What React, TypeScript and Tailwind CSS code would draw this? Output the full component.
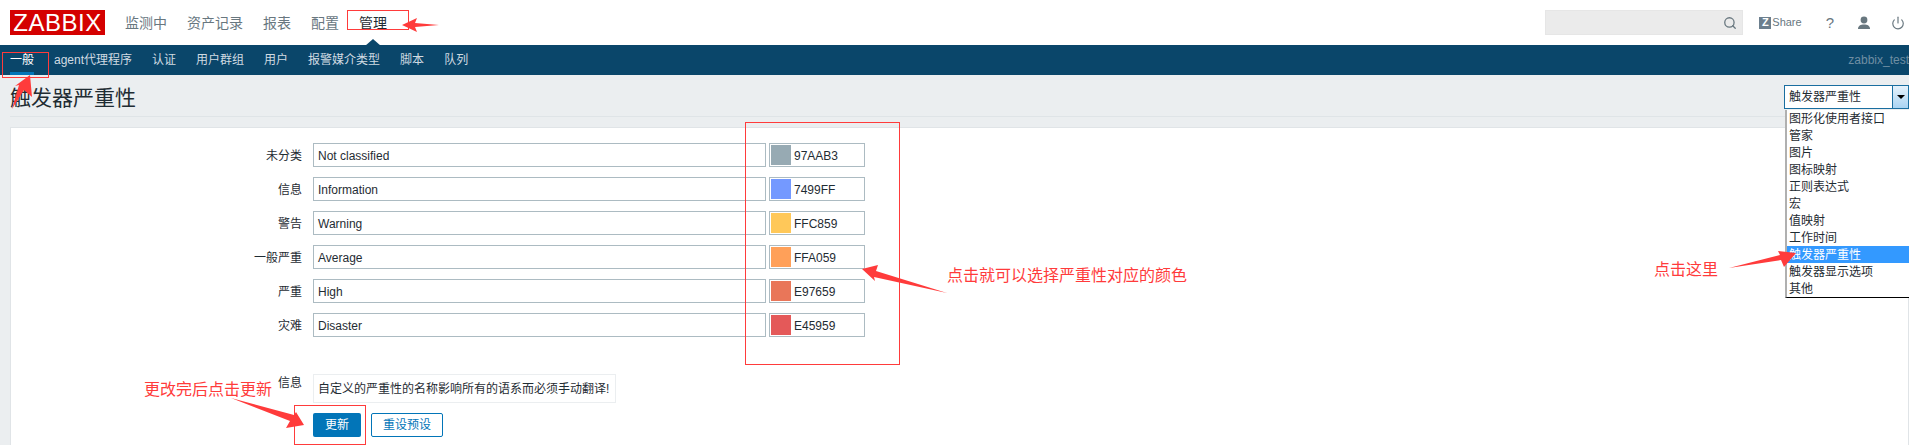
import { Search, Power } from "lucide-react";

const FONT = "[font-family:'Liberation_Sans','Noto_Sans_CJK_SC',sans-serif]";

const mainNav = ["监测中", "资产记录", "报表", "配置", "管理"];
const subNav = ["一般", "agent代理程序", "认证", "用户群组", "用户", "报警媒介类型", "脚本", "队列"];
const severities = [
  { label: "未分类", name: "Not classified", hex: "97AAB3", swatch: "bg-[#97AAB3]" },
  { label: "信息", name: "Information", hex: "7499FF", swatch: "bg-[#7499FF]" },
  { label: "警告", name: "Warning", hex: "FFC859", swatch: "bg-[#FFC859]" },
  { label: "一般严重", name: "Average", hex: "FFA059", swatch: "bg-[#FFA059]" },
  { label: "严重", name: "High", hex: "E97659", swatch: "bg-[#E97659]" },
  { label: "灾难", name: "Disaster", hex: "E45959", swatch: "bg-[#E45959]" },
];
const options = ["图形化使用者接口", "管家", "图片", "图标映射", "正则表达式", "宏", "值映射", "工作时间", "触发器严重性", "触发器显示选项", "其他"];

function Header() {
  return (
    <header className="flex h-[45px] items-center bg-white pl-[10px]">
      <div className="flex h-[25px] w-[95px] items-center justify-center bg-[#d40000] text-[24px] leading-none tracking-[0.5px] text-white">
        ZABBIX
      </div>
      <nav className="ml-[20px] flex gap-[20px] text-sm text-[#68777f]">
        {mainNav.map((item) => (
          <span key={item} className={item === "管理" ? "relative text-[#1f2c33]" : ""}>
            {item}
            {item === "管理" && (
              <span className="absolute left-[6px] top-[26px] h-0 w-0 border-x-[8px] border-b-[7px] border-x-transparent border-b-[#0a466a]" />
            )}
          </span>
        ))}
      </nav>
      <div className="ml-auto flex items-center">
        <div className="flex h-[25px] w-[198px] items-center justify-end border border-[#e6e6e6] bg-[#ebebeb] pr-[5px]">
          <Search size={14} strokeWidth={2.2} className="text-[#68777f]" />
        </div>
        <div className="ml-[16px] flex h-[12px] w-[12px] items-center justify-center bg-[#6c7f8e] text-[11px] font-bold leading-none text-white">
          Z
        </div>
        <span className="ml-[1px] text-[11px] text-[#68777f]">Share</span>
        <span className="ml-[24px] text-[15px] leading-none text-[#68777f]">?</span>
        <svg viewBox="0 0 14 14" className="ml-[23px] h-[14px] w-[14px] fill-[#68777f]">
          <circle cx="7" cy="4" r="3.4" />
          <path d="M1 13c0-3 2.500-4.400 6-4.400s6 1.400 6 4.400z" />
        </svg>
        <Power size={14} strokeWidth={2} className="ml-[20px] mr-[4px] text-[#68777f]" />
      </div>
    </header>
  );
}

function SubNav() {
  return (
    <div className="flex h-[30px] items-center justify-between bg-[#0a466a] pl-[10px] text-xs">
      <div className="flex h-full gap-[20px] text-[#d0dbe2]">
        {subNav.map((item) => (
          <span
            key={item}
            className={
              item === "一般"
                ? "flex items-center border-b-[3px] border-[#0275b8] pt-[3px] text-white"
                : "flex items-center"
            }
          >
            {item}
          </span>
        ))}
      </div>
      <span className="text-[#6f8ea3]">zabbix_test</span>
    </div>
  );
}

function SeverityRow({ label, name, hex, swatch }: (typeof severities)[number]) {
  return (
    <div className="flex h-[24px] items-center text-xs text-[#1f2c33]">
      <span className="w-[291px] pt-[1px] text-right">{label}</span>
      <div className="ml-[11px] flex h-full w-[453px] items-center border border-[#acbbc2] bg-white pl-[4px] pt-[1px]">
        {name}
      </div>
      <div className="ml-[3px] flex h-full w-[96px] items-center border border-[#acbbc2] bg-white pl-[1px]">
        <span className={`h-[20px] w-[20px] ${swatch}`} />
        <span className="ml-[3px] pt-[1px]">{hex}</span>
      </div>
    </div>
  );
}

function Form() {
  return (
    <section className="ml-[10px] mt-[10px] h-[330px] border border-[#e0e4e7] bg-white pt-[15px]">
      <div className="flex flex-col gap-[10px]">
        {severities.map((s) => (
          <SeverityRow key={s.label} {...s} />
        ))}
      </div>
      <div className="mt-[37px] flex text-xs text-[#1f2c33]">
        <span className="w-[291px] pt-[1px] text-right">信息</span>
        <div className="ml-[11px] flex h-[29px] w-[303px] items-center border border-[#ebeef0] pl-[4px]">
          自定义的严重性的名称影响所有的语系而必须手动翻译!
        </div>
      </div>
      <div className="ml-[302px] mt-[10px] flex gap-[10px] text-xs">
        <button className="h-[24px] w-[48px] rounded-[2px] bg-[#0275b8] text-white">更新</button>
        <button className="h-[24px] w-[72px] rounded-[2px] border border-[#0275b8] bg-white text-[#0275b8]">重设预设</button>
      </div>
    </section>
  );
}

function TitleBar() {
  return (
    <div className="relative ml-[10px] flex h-[42px] items-start justify-between border-b border-[#dfe4e7]">
      <h1 className="pt-[9px] text-[21px] leading-[28px] text-[#1f2c33]">触发器严重性</h1>
      <div className="mt-[10px] w-[125px]">
        <div className="flex h-[24px] items-center justify-between border border-[#1a6ea0] bg-white pl-[4px] text-xs text-[#1f2c33]">
          触发器严重性
          <span className="flex h-full w-[16px] items-center justify-center border-l border-[#1a6ea0] bg-gradient-to-b from-[#e6f2fb] to-[#a9d4f3]">
            <span className="h-0 w-0 border-x-[4px] border-t-[4px] border-x-transparent border-t-black" />
          </span>
        </div>
        <ul className="absolute right-0 top-[35px] z-10 w-[124px] border-b border-l-2 border-b-black border-l-[#b0b0b0] bg-white text-xs text-[#1f2c33]">
          {options.map((o) => (
            <li
              key={o}
              className={
                o === "触发器严重性"
                  ? "flex h-[17px] items-center bg-[#3399ff] pl-[2px] text-white"
                  : "flex h-[17px] items-center pl-[2px]"
              }
            >
              {o}
            </li>
          ))}
        </ul>
      </div>
    </div>
  );
}

// red notes drawn on top of the screenshot
function Annotations() {
  return (
    <div className="pointer-events-none absolute inset-0 z-20 text-base leading-none text-[#ff3b3b]">
      <div className="absolute left-[347px] top-[10px] h-[20px] w-[62px] border border-[#ff3b3b]" />
      <div className="absolute left-[2px] top-[52px] h-[26px] w-[47px] border border-[#ff3b3b]" />
      <div className="absolute left-[745px] top-[122px] h-[243px] w-[155px] border border-[#ff3b3b]" />
      <div className="absolute left-[294px] top-[405px] h-[40px] w-[72px] border border-[#ff3b3b]" />
      <span className="absolute left-[947px] top-[268px]">点击就可以选择严重性对应的颜色</span>
      <span className="absolute left-[1654px] top-[262px]">点击这里</span>
      <span className="absolute left-[144px] top-[382px]">更改完后点击更新</span>
      <svg className="absolute inset-0 h-[445px] w-[1909px] fill-[#ff3b3b]">
        <polygon points="402,25 417,18 415,23 439,25 415,27 417,32" />
        <polygon points="30,75 32,97 24,90 12,109 19,85 15,86" />
        <polygon points="862,269 878,265 876,271 947,293 874,277 875,281" />
        <polygon points="1796,253 1784,267 1781,260 1729,268 1780,255 1778,251" />
        <polygon points="304,425 286,428 290,421 231,398 294,415 296,412" />
      </svg>
    </div>
  );
}

export default function App() {
  return (
    <div className={`relative h-[445px] w-[1909px] overflow-hidden bg-[#ebeef0] ${FONT}`}>
      <Header />
      <SubNav />
      <TitleBar />
      <Form />
      <Annotations />
    </div>
  );
}
